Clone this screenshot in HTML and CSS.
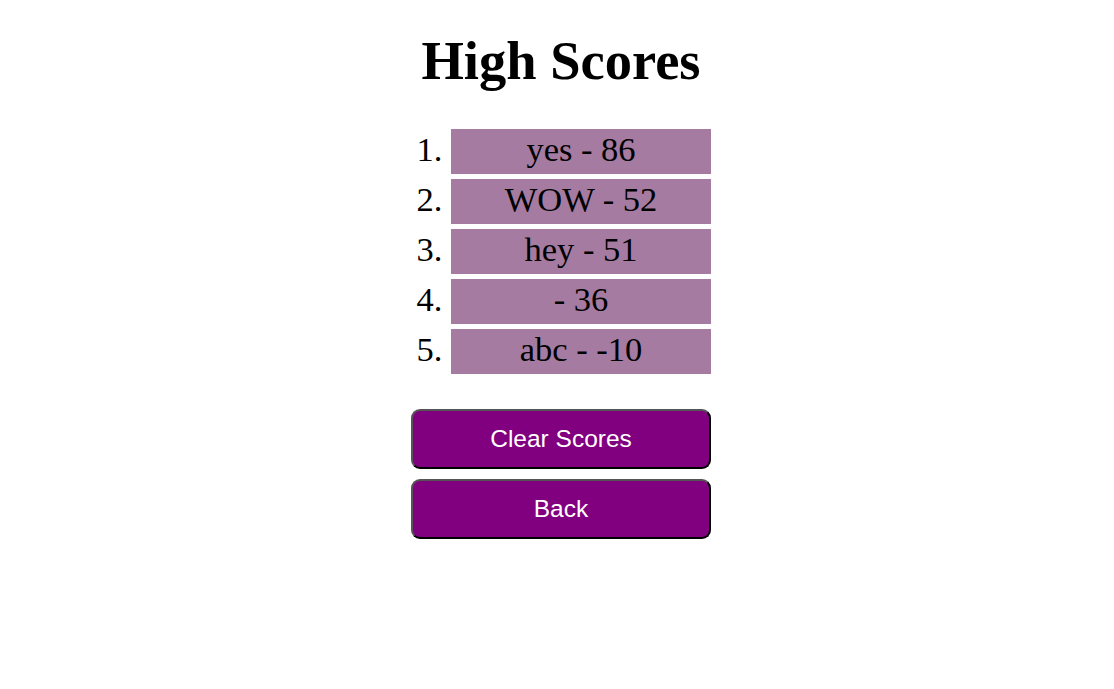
FILE: index.html
```html
<!DOCTYPE html>
<html>
<head>
<meta charset="utf-8">
<link rel="stylesheet" href="styles.css">
</head>
<body>
<div class="page">
  <h1 class="title">High Scores</h1>
  <ol class="scores">
    <li class="score">yes - 86</li>
    <li class="score">WOW - 52</li>
    <li class="score">hey - 51</li>
    <li class="score"> - 36</li>
    <li class="score">abc - -10</li>
  </ol>
  <div class="actions">
    <button class="btn">Clear Scores</button>
    <button class="btn">Back</button>
  </div>
</div>
</body>
</html>
```
FILE: styles.css
```css
body {
  margin: 8px;
  font-family: "Liberation Serif", serif;
  color: #000;
  background: #fff;
}
.page {
  display: flex;
  flex-direction: column;
  align-items: center;
  padding-left: 8px;
}
.title {
  font-size: 54.5px;
  font-weight: bold;
  margin: 22px 0 37px;
  line-height: 62px;
}
.scores {
  width: 260px;
  margin: 0;
  padding: 0 0 0 40px;
  font-size: 34.5px;
}
.score {
  background: #a57ba1;
  text-align: center;
  height: 45px;
  line-height: 40px;
  margin-bottom: 5px;
}
.actions {
  display: flex;
  flex-direction: column;
  gap: 10px;
  margin-top: 30px;
}
.btn {
  width: 300px;
  height: 60px;
  background: #800080;
  color: #fff;
  font-family: "Liberation Sans", Arial, sans-serif;
  font-size: 24.5px;
  border: 2px solid;
  border-color: #555 #000 #000 #555;
  border-radius: 9px;
  padding: 0;
}
```
